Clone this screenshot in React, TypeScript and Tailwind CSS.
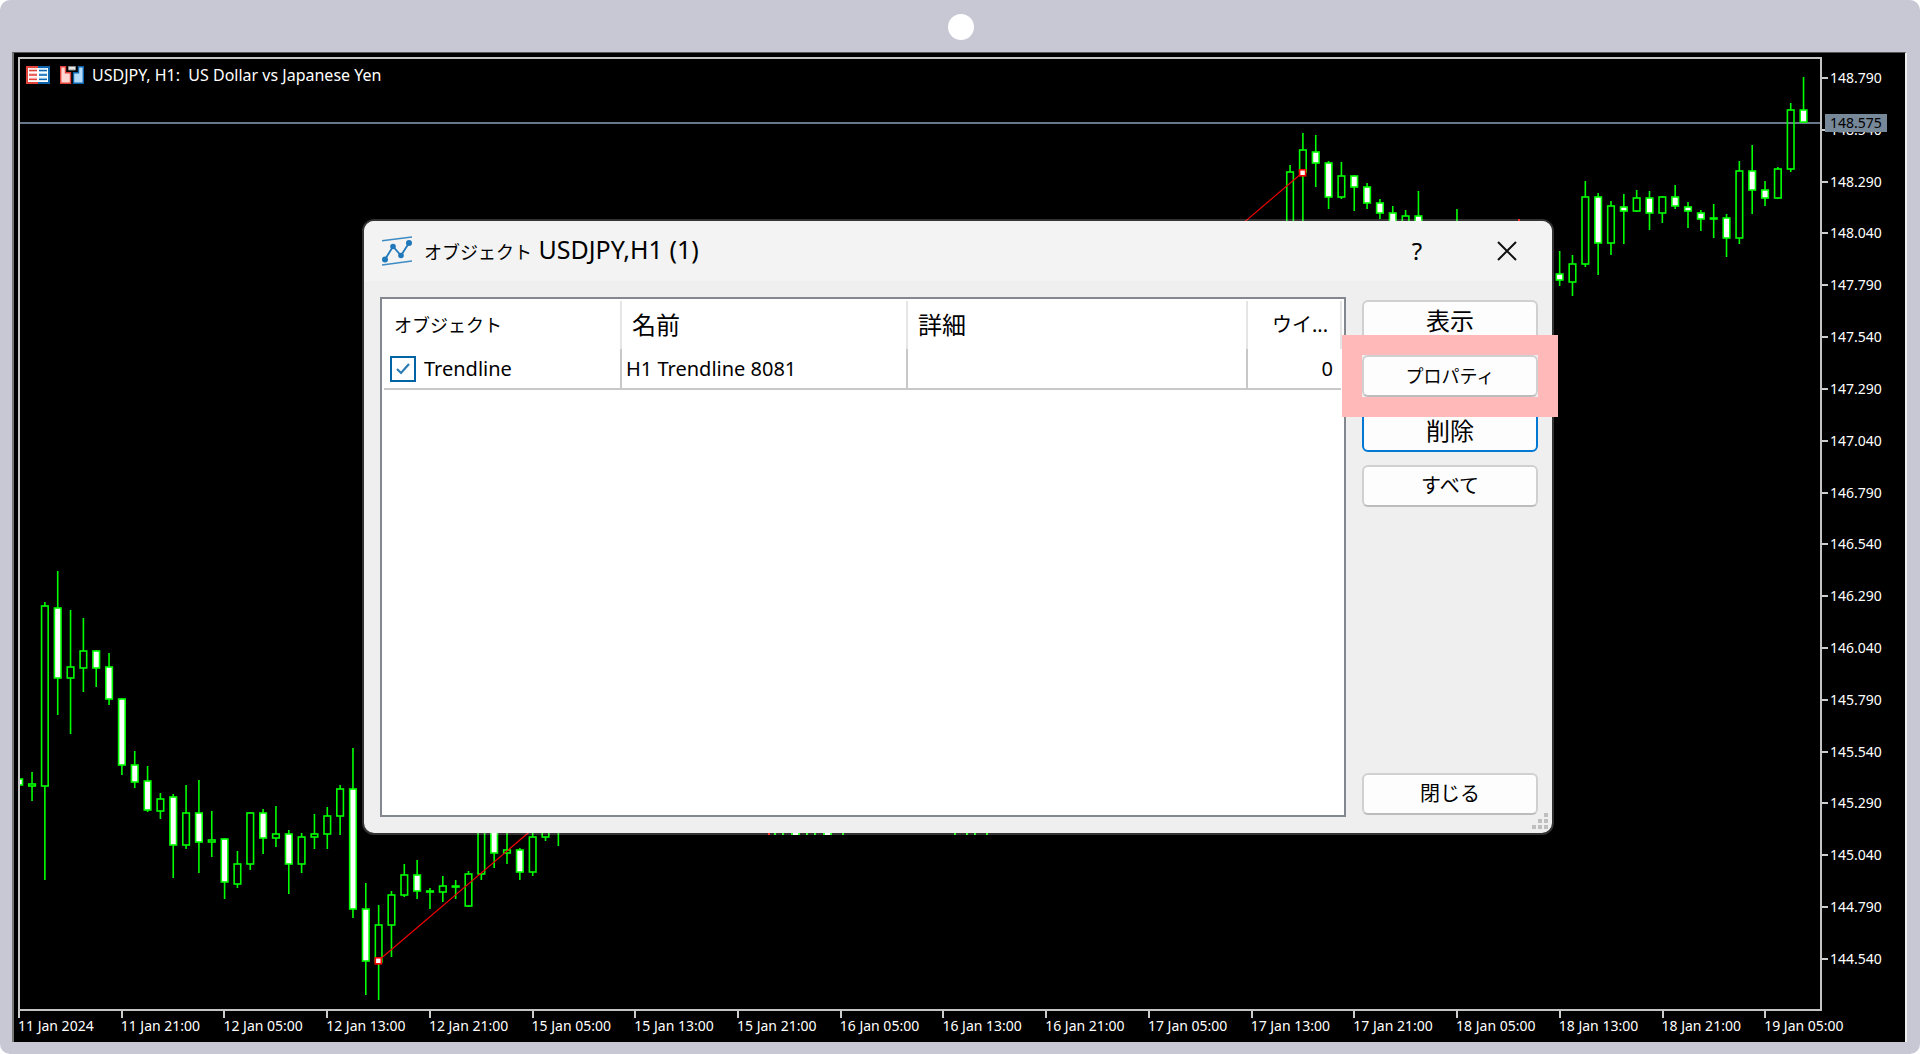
import React from 'react';

type Candle = [index: number, high: number, top: number, bottom: number, low: number, filled: 0 | 1];

const CANDLES: Candle[] = [
  [0, 779, 779, 785, 785, 1],
  [1, 772, 784, 786, 801, 0],
  [2, 602, 606, 786, 880, 0],
  [3, 571, 608, 678, 715, 1],
  [4, 610, 667, 678, 734, 0],
  [5, 618, 651, 668, 692, 0],
  [6, 650, 651, 668, 687, 1],
  [7, 653, 667, 699, 705, 1],
  [8, 698, 699, 765, 775, 1],
  [9, 751, 765, 782, 788, 1],
  [10, 766, 781, 810, 812, 1],
  [11, 793, 799, 811, 819, 0],
  [12, 794, 797, 845, 878, 1],
  [13, 785, 813, 845, 849, 0],
  [14, 780, 813, 842, 873, 1],
  [15, 811, 840, 842, 857, 0],
  [16, 838, 839, 882, 899, 1],
  [17, 851, 864, 884, 888, 0],
  [18, 812, 813, 864, 870, 0],
  [19, 809, 813, 838, 854, 1],
  [20, 806, 834, 838, 847, 0],
  [21, 830, 834, 864, 894, 1],
  [22, 833, 837, 864, 873, 0],
  [23, 814, 834, 837, 849, 0],
  [24, 807, 816, 834, 849, 0],
  [25, 785, 789, 816, 835, 0],
  [26, 748, 789, 909, 918, 1],
  [27, 883, 909, 961, 995, 1],
  [28, 905, 925, 962, 1000, 0],
  [29, 891, 895, 925, 957, 0],
  [30, 864, 875, 895, 897, 0],
  [31, 860, 875, 891, 899, 1],
  [32, 888, 891, 892, 909, 0],
  [33, 876, 886, 892, 902, 0],
  [34, 880, 886, 887, 899, 0],
  [35, 871, 874, 906, 907, 0],
  [36, 810, 820, 874, 880, 0],
  [37, 810, 820, 853, 868, 1],
  [38, 820, 850, 853, 864, 0],
  [39, 848, 850, 872, 880, 1],
  [40, 820, 837, 872, 876, 0],
  [41, 810, 815, 837, 841, 0],
  [42, 800, 805, 820, 846, 0],
  [99, 165, 172, 300, 320, 0],
  [100, 133, 150, 172, 300, 0],
  [101, 135, 152, 163, 187, 1],
  [102, 161, 163, 197, 209, 1],
  [103, 162, 176, 197, 199, 0],
  [104, 175, 176, 187, 211, 1],
  [105, 183, 187, 203, 209, 1],
  [106, 199, 203, 213, 219, 1],
  [107, 206, 213, 230, 240, 1],
  [108, 210, 216, 230, 240, 0],
  [109, 191, 216, 230, 240, 1],
  [112, 209, 230, 240, 250, 0],
  [120, 251, 274, 280, 286, 1],
  [121, 255, 264, 282, 296, 0],
  [122, 181, 197, 264, 267, 0],
  [123, 193, 197, 243, 275, 1],
  [124, 201, 206, 243, 255, 0],
  [125, 194, 207, 211, 244, 1],
  [126, 190, 198, 211, 212, 0],
  [127, 191, 198, 213, 230, 1],
  [128, 196, 197, 213, 223, 0],
  [129, 185, 197, 206, 209, 1],
  [130, 202, 207, 211, 228, 1],
  [131, 210, 213, 219, 231, 1],
  [132, 204, 218, 219, 238, 0],
  [133, 214, 218, 238, 257, 1],
  [134, 161, 171, 238, 244, 0],
  [135, 145, 171, 190, 214, 1],
  [136, 181, 190, 198, 206, 1],
  [137, 167, 169, 198, 199, 0],
  [138, 103, 110, 169, 172, 0],
  [139, 77, 110, 122, 123, 1],
];

const PRICES = [
  '148.790', '148.540', '148.290', '148.040', '147.790', '147.540',
  '147.290', '147.040', '146.790', '146.540', '146.290', '146.040',
  '145.790', '145.540', '145.290', '145.040', '144.790', '144.540',
];

const TIMES = [
  '11 Jan 2024', '11 Jan 21:00', '12 Jan 05:00', '12 Jan 13:00', '12 Jan 21:00', '15 Jan 05:00',
  '15 Jan 13:00', '15 Jan 21:00', '16 Jan 05:00', '16 Jan 13:00', '16 Jan 21:00', '17 Jan 05:00',
  '17 Jan 13:00', '17 Jan 21:00', '18 Jan 05:00', '18 Jan 13:00', '18 Jan 21:00', '19 Jan 05:00',
];

const candleX = (index: number) => 19.2 + index * 12.837;

const CandleChart: React.FC = () => (
  <svg className="block h-full w-full" viewBox="20 59 1800 950" preserveAspectRatio="none">
    <line x1="20" x2="1820" y1="123" y2="123" stroke="#66788a" strokeWidth="2" />
    {CANDLES.map(([index, high, top, bottom, low, filled]) => {
      const x = candleX(index);
      return (
        <g key={index} stroke="#00ff00" strokeWidth="1.6">
          <line x1={x} x2={x} y1={high} y2={top} />
          <line x1={x} x2={x} y1={bottom} y2={low} />
          <rect x={x - 3.3} y={top} width="6.6" height={bottom - top} fill={filled ? '#fff' : 'none'} />
        </g>
      );
    })}
    {/* tips of the bars that end right under the dialog frame */}
    <g fill="#00ff00">
      {[774, 782, 791, 798, 806, 814, 823, 830, 842, 954, 966, 974, 986].map((x) => (
        <rect key={x} x={x} y="831" width="2" height="4" />
      ))}
    </g>
    <path d="M793 831h5v4h-5zM825 831h5v4h-5z" fill="#fff" />
    <rect x="768" y="831" width="2" height="4" fill="#f00" />
    <rect x="1518" y="219" width="2" height="4" fill="#f00" />
    <line x1="378" y1="961" x2="1302" y2="173" stroke="#f00000" strokeWidth="1.2" />
    {[[378.3, 960.8], [1302.6, 172.8]].map(([x, y]) => (
      <rect key={x} x={x - 3} y={y - 3} width="6" height="6" fill="#fff" stroke="#f00" strokeWidth="1.6" />
    ))}
  </svg>
);

const DepthIcon = () => (
  <svg width="24" height="18" viewBox="0 0 24 18">
    <path d="M0 0h12v18H0z" fill="#e2443c" />
    <path d="M12 0h12v18H12z" fill="#0c64ad" />
    <path d="M2 2h20v14H2z" fill="#fff" />
    <path d="M3 4h8M3 8.500h8M3 13h8" stroke="#ffc9c4" strokeWidth="3" />
    <path d="M13 4h8M13 8.500h8M13 13h8" stroke="#b5dcfa" strokeWidth="3" />
    <path d="M3 4.600h8M3 9h8M3 13.400h8" stroke="#e2443c" strokeWidth="1.300" />
    <path d="M13 4.600h8M13 9h8M13 13.400h8" stroke="#0c64ad" strokeWidth="1.300" />
  </svg>
);

const TradeIcon = () => (
  <svg width="24" height="18" viewBox="0 0 24 18">
    <path d="M.7.700h4.800v6h5v10.600H.7z" fill="#ffd6d2" stroke="#e2443c" strokeWidth="1.400" />
    <path d="M23.300.700h-4.800v6h-5v10.600h9.800z" fill="#b5dcfa" stroke="#0c64ad" strokeWidth="1.400" />
    <path d="M8.500.500h7v3.500h-7z" fill="#e8e8e8" stroke="#8a8a8a" />
  </svg>
);

const ObjectsIcon = () => (
  <svg width="30" height="30" viewBox="0 0 30 30" fill="none" stroke="#1f78ba">
    <path d="M0 4.800 30 1M0 29l30-4" strokeWidth="1.600" strokeOpacity=".85" />
    <path d="m3 23.500 8-13 8 9 8-12.500" strokeWidth="1.800" />
    <g fill="#1f78ba" stroke="none">
      <circle cx="3" cy="23.500" r="3" />
      <circle cx="11" cy="10.500" r="2.800" />
      <circle cx="19" cy="19.500" r="2.800" />
      <circle cx="27" cy="7" r="3" />
    </g>
  </svg>
);

const ResizeGrip = () => (
  <svg className="absolute right-1 bottom-1" width="16" height="16" fill="#bfbfbf">
    <path d="M12 0h4v4h-4zM6 6h4v4H6zM12 6h4v4h-4zM0 12h4v4H0zM6 12h4v4H6zM12 12h4v4h-4z" />
  </svg>
);

interface DialogButtonProps {
  children: React.ReactNode;
  size?: 'text-lg' | 'text-xl' | 'text-2xl';
  focused?: boolean;
}

const DialogButton: React.FC<DialogButtonProps> = ({ children, size = 'text-2xl', focused = false }) => (
  <button
    type="button"
    className={`block h-[42px] w-full rounded-md border-2 bg-[#fdfdfd] leading-none ${size} ${
      focused ? 'border-[#0078d4]' : 'border-[#d0d0d0] border-b-[#bcbcbc]'
    }`}
  >
    {children}
  </button>
);

const ObjectsTable: React.FC = () => (
  <div className="min-h-[520px] flex-1 border-2 border-[#828790] bg-white p-0.5">
    <table className="w-full table-fixed border-collapse text-left">
      <colgroup>
        <col className="w-[237px]" />
        <col className="w-[286px]" />
        <col />
        <col className="w-[94px]" />
      </colgroup>
      <thead>
        <tr className="h-12 leading-none [&>th]:border-r-2 [&>th]:border-[#e5e5e5] [&>th]:p-0 [&>th]:font-normal">
          <th className="text-lg"><span className="pl-[10px]">オブジェクト</span></th>
          <th className="text-2xl"><span className="pl-[10px]">名前</span></th>
          <th className="text-2xl"><span className="pl-[10px]">詳細</span></th>
          <th className="text-right text-xl"><span className="pr-3">ウイ...</span></th>
        </tr>
      </thead>
      <tbody>
        <tr className="h-10 border-b-2 border-[#c8c8c8] text-xl leading-none [&>td]:border-[#c8c8c8] [&>td]:p-0">
          <td className="border-r-2">
            <label className="flex items-center gap-2 pl-1.5">
              <span className="relative flex">
                <input
                  type="checkbox"
                  defaultChecked
                  className="peer size-[26px] appearance-none border-2 border-[#0063a6] bg-white"
                />
                <svg className="absolute inset-0 hidden peer-checked:block" width="26" height="26" fill="none">
                  <path d="m7 13 4 4 8-9" stroke="#2c7cb5" strokeWidth="2.200" />
                </svg>
              </span>
              Trendline
            </label>
          </td>
          <td className="border-r-2"><span className="pl-1">H1 Trendline 8081</span></td>
          <td className="border-r-2" />
          <td className="text-right"><span className="pr-2">0</span></td>
        </tr>
      </tbody>
    </table>
  </div>
);

const ObjectsDialog: React.FC = () => (
  <section
    role="dialog"
    aria-labelledby="dialog-title"
    className="relative w-[1192px] max-w-full rounded-xl border-2 border-white/20 bg-[#efefef] bg-clip-padding text-black"
  >
    <header className="flex h-15 items-center rounded-t-[10px] bg-[#f3f3f3] pl-[18px]">
      <ObjectsIcon />
      <h1 id="dialog-title" className="ml-3 flex-1 text-[25px] leading-none">
        <span className="text-lg">オブジェクト</span> USDJPY,H1 (1)
      </h1>
      <button type="button" className="h-full w-[90px] text-2xl leading-none">?</button>
      <button type="button" aria-label="閉じる" className="flex h-full w-[90px] items-center justify-center">
        <svg width="20" height="20" stroke="#111" strokeWidth="2">
          <path d="m1 1 18 18M19 1 1 19" />
        </svg>
      </button>
    </header>
    <div className="flex gap-4 py-4 pr-[14px] pl-4">
      <ObjectsTable />
      <div className="flex w-44 flex-col gap-[13px] pt-[3px] pb-0.5">
        <DialogButton>表示</DialogButton>
        <div className="relative">
          <DialogButton size="text-lg">プロパティ</DialogButton>
          <span className="pointer-events-none absolute -inset-5 z-10 border-[20px] border-[#ffb9b9]" />
        </div>
        <DialogButton focused>削除</DialogButton>
        <DialogButton size="text-xl">すべて</DialogButton>
        <div className="mt-auto">
          <DialogButton size="text-xl">閉じる</DialogButton>
        </div>
      </div>
    </div>
    <ResizeGrip />
  </section>
);

export default function App() {
  return (
    <div className="bg-white font-['Noto_Sans','Noto_Sans_CJK_JP',sans-serif]">
      <div className="relative flex min-h-screen flex-col rounded-[10px] bg-[#c8c7d4] pr-[13px] pb-3 pl-3">
        <div className="flex h-13 items-center justify-center pt-0.5 pl-0.5">
          <span className="size-[26px] rounded-full bg-white" />
        </div>

        <main className="grid flex-1 grid-cols-[minmax(0,1fr)_83px] grid-rows-[minmax(0,1fr)_31px] border-t border-r-2 border-l-2 border-t-[#555] border-r-[#eee] border-l-[#777] bg-black pt-1 pl-1 text-sm text-white">
          <div className="relative border-2 border-[#c4c4c4]">
            <CandleChart />
            <div className="absolute top-[7px] left-1.5 flex items-center">
              <DepthIcon />
              <span className="ml-[10px] flex"><TradeIcon /></span>
              <span className="ml-2 text-base leading-[18px] whitespace-pre">USDJPY, H1:  US Dollar vs Japanese Yen</span>
            </div>
          </div>

          <div className="relative flex flex-col justify-between pt-[11px] pb-[42px]">
            {PRICES.map((price) => (
              <div key={price} className="flex items-center gap-0.5 leading-5">
                <span className="h-0.5 w-1.5 bg-[#ccc]" />
                {price}
              </div>
            ))}
            <span className="absolute top-[57px] left-[3px] bg-[#778899] px-[5px] leading-[18px] text-black">148.575</span>
          </div>

          <div className="col-span-2 flex pr-[38px]">
            {TIMES.map((time) => (
              <div key={time} className="flex-1 leading-4 whitespace-nowrap">
                <span className="block h-[7px] w-0.5 bg-[#ccc]" />
                {time}
              </div>
            ))}
          </div>
        </main>

        <div className="absolute inset-0 flex items-center justify-center pr-1">
          <ObjectsDialog />
        </div>
      </div>
    </div>
  );
}
